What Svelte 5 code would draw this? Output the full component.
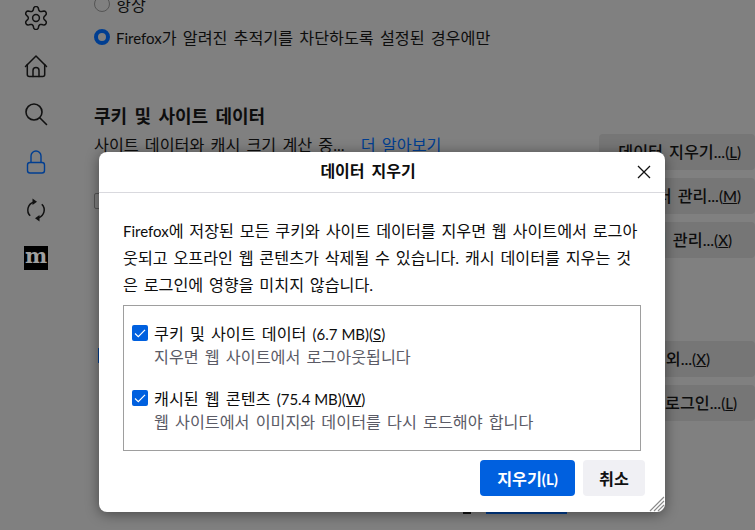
<script>
	const sideIcons = ['gear', 'home', 'search', 'lock', 'sync', 'mdn'];
	const options = [
		{ label: '쿠키 및 사이트 데이터', size: '(6.7 MB)', key: 'S', hint: '지우면 웹 사이트에서 로그아웃됩니다' },
		{ label: '캐시된 웹 콘텐츠', size: '(75.4 MB)', key: 'W', hint: '웹 사이트에서 이미지와 데이터를 다시 로드해야 합니다' }
	];
	const sideButtons = [
		{ label: '데이터 지우기...', key: 'L', pad: 14 },
		{ label: '데이터 관리...', key: 'M', pad: 14 },
		{ label: '예외 관리...', key: 'X', pad: 23 }
	];
	const lowerButtons = [
		{ label: '예외...', key: 'X', pad: 45 },
		{ label: '저장된 로그인...', key: 'L', pad: 18 }
	];

	// six rounded lobes, top lobe pointing up
	function gearPath() {
		const pts = [];
		for (let i = 0; i < 96; i++) {
			const a = (i / 96) * Math.PI * 2;
			const wave = Math.cos(6 * a);
			const r = 9.6 + 1.9 * Math.sign(wave) * Math.pow(Math.abs(wave), 0.6);
			pts.push(`${(12 + r * Math.sin(a)).toFixed(2)} ${(12 - r * Math.cos(a)).toFixed(2)}`);
		}
		return 'M' + pts.join('L') + 'Z';
	}
</script>

<div class="page">
	<nav class="sidebar">
		{#each sideIcons as icon}
			<div class="side-icon">
				{#if icon === 'gear'}
					<svg width="24" height="24" viewBox="0 0 24 24" fill="none" stroke="#111" stroke-width="1.5" stroke-linejoin="round">
						<path d={gearPath()} />
						<circle cx="12" cy="12" r="3.4" />
					</svg>
				{:else if icon === 'home'}
					<svg width="24" height="24" viewBox="0 0 24 24" fill="none" stroke="#111" stroke-width="1.5" stroke-linejoin="round" stroke-linecap="round">
						<path d="M1.500 12.500 12 2l10.500 10.500" />
						<path d="M3.300 10.500V20.500a2 2 0 0 0 2 2h13.400a2 2 0 0 0 2-2V10.500" />
						<path d="M9 22.500v-6a3 3 0 0 1 6 0v6" />
					</svg>
				{:else if icon === 'search'}
					<svg width="24" height="24" viewBox="0 0 24 24" fill="none" stroke="#111" stroke-width="1.6" stroke-linecap="round">
						<circle cx="10" cy="10" r="8" />
						<path d="m16 16 6.500 6.500" />
					</svg>
				{:else if icon === 'lock'}
					<svg width="24" height="24" viewBox="0 0 24 24" fill="none" stroke="#003e91" stroke-width="1.4" stroke-linejoin="round">
						<rect x="3.500" y="12.500" width="17" height="10.500" rx="2.500" />
						<path d="M7 12.500V6a5 5 0 0 1 10 0v6.500" />
					</svg>
				{:else if icon === 'sync'}
					<svg width="24" height="24" viewBox="0 0 24 24" fill="none" stroke="#111" stroke-width="1.5">
						<path d="M6.200 17.800A8.200 8.200 0 0 1 9.500 4.200" />
						<path d="M17.800 6.200A8.200 8.200 0 0 1 14.500 19.800" />
						<path d="M8.500.5 13 3.800 8.500 7z" fill="#111" stroke="none" />
						<path d="M15.500 17 11 20.200l4.500 3.300z" fill="#111" stroke="none" />
					</svg>
				{:else}
					<div class="mdn">m</div>
				{/if}
			</div>
		{/each}
	</nav>

	<main class="content">
		<div class="radio-row clipped">
			<span class="radio"></span>
			<span>항상</span>
		</div>
		<div class="radio-row">
			<span class="radio on"></span>
			<span><span class="latin">Firefox</span>가 알려진 추적기를 차단하도록 설정된 경우에만</span>
		</div>

		<div class="section">
			<div class="section-text">
				<h2>쿠키 및 사이트 데이터</h2>
				<p>사이트 데이터와 캐시 크기 계산 중... <span class="link">더 알아보기</span></p>
				<div class="page-check"></div>
			</div>
			<div class="section-buttons">
				{#each sideButtons as b}
					<div class="bg-button" style="padding-right: {b.pad}px">{b.label}<span class="latin">(<u>{b.key}</u>)</span></div>
				{/each}
			</div>
		</div>

		<div class="section lower">
			<div class="section-text">
				<div class="lower-mark"></div>
			</div>
			<div class="section-buttons">
				{#each lowerButtons as b}
					<div class="bg-button" style="padding-right: {b.pad}px">{b.label}<span class="latin">(<u>{b.key}</u>)</span></div>
				{/each}
			</div>
		</div>

		<div class="bottom-link">
			<span class="dash"></span>
			<span class="dark-link"></span>
		</div>
	</main>

	<div class="dialog">
		<header>
			<h1>데이터 지우기</h1>
			<button class="close" aria-label="닫기">
				<svg width="14" height="14" viewBox="0 0 14 14" stroke="#111" stroke-width="1.3" fill="none">
					<path d="m1 1 12 12M13 1 1 13" />
				</svg>
			</button>
		</header>

		<div class="body">
			<p class="intro"><span class="latin">Firefox</span>에 저장된 모든 쿠키와 사이트 데이터를 지우면 웹 사이트에서 로그아웃되고 오프라인 웹 콘텐츠가 삭제될 수 있습니다. 캐시 데이터를 지우는 것은 로그인에 영향을 미치지 않습니다.</p>

			<div class="box">
				{#each options as o}
					<div class="option">
						<div class="option-main">
							<span class="check">
								<svg width="16" height="16" viewBox="0 0 16 16" fill="none" stroke="#fff" stroke-width="1.2">
									<path d="m3 8.500 3.300 3.200L13 4.800" />
								</svg>
							</span>
							<span>{o.label} <span class="latin">{o.size}(<u>{o.key}</u>)</span></span>
						</div>
						<div class="hint">{o.hint}</div>
					</div>
				{/each}
			</div>

			<div class="actions">
				<button class="primary">지우기<span class="latin">(L)</span></button>
				<button class="secondary">취소</button>
			</div>
		</div>

		<svg class="grip" width="16" height="16" viewBox="0 0 16 16" stroke="#8a8a8a" stroke-width="1.2" fill="none">
			<path d="M1 15 15 1M5 15 15 5M9 15l6-6M13 15l2-2" />
		</svg>
	</div>
</div>

<style>
	:global(body) {
		margin: 0;
		overflow: hidden;
	}

	.page {
		position: relative;
		display: flex;
		width: 755px;
		height: 530px;
		overflow: hidden;
		background: #808080;
		color: #0d0d0d;
		font-family: Lato, "Noto Sans CJK KR", sans-serif;
		font-size: 16.2px;
		word-spacing: 2px;
	}

	.latin {
		font-size: 15px;
		line-height: 1;
		word-spacing: 0;
	}

	.sidebar {
		display: flex;
		flex-direction: column;
		align-items: center;
		gap: 24px;
		width: 72px;
		flex: none;
		padding-top: 6px;
	}

	.side-icon {
		width: 24px;
		height: 24px;
	}

	.mdn {
		width: 24px;
		height: 24px;
		background: #000;
		color: #a0a0a0;
		font-family: "DejaVu Serif", serif;
		font-weight: 700;
		font-size: 21px;
		line-height: 20px;
		text-align: center;
	}

	.content {
		flex: 1;
		min-width: 0;
		padding-left: 22px;
	}

	.radio-row {
		display: flex;
		align-items: center;
		gap: 6px;
		height: 20px;
		white-space: nowrap;
	}

	.radio-row.clipped {
		margin: -6px 0 13px;
	}

	.radio {
		box-sizing: border-box;
		width: 16px;
		height: 16px;
		border: 1px solid #555;
		border-radius: 50%;
		flex: none;
	}

	.radio.on {
		border: 4px solid #003e91;
		background: #808080;
	}

	.section {
		display: flex;
		justify-content: space-between;
		margin-top: 57px;
	}

	h2 {
		margin: 0 0 5px;
		font-size: 18px;
		font-weight: 700;
		line-height: 24px;
		word-spacing: 3px;
	}

	.section p {
		margin: 0;
		line-height: 24px;
		white-space: nowrap;
	}

	.link {
		color: #003e91;
		margin-left: 10px;
		text-decoration: underline;
	}

	.page-check {
		box-sizing: border-box;
		width: 16px;
		height: 16px;
		margin-top: 36px;
		border: 1px solid #555;
		border-radius: 2px;
	}

	.section-buttons {
		display: flex;
		flex-direction: column;
		gap: 8px;
		margin-top: 30px;
		width: 156px;
		flex: none;
	}

	.bg-button {
		box-sizing: border-box;
		height: 36px;
		background: #767676;
		border-radius: 4px;
		font-weight: 500;
		line-height: 36px;
		text-align: right;
		white-space: nowrap;
	}

	.section.lower {
		margin-top: 83px;
	}

	.section.lower .section-buttons {
		margin-top: 0;
	}

	.lower-mark {
		width: 2px;
		height: 15px;
		margin: 7px 0 0 4px;
		background: #003e91;
	}

	.bottom-link {
		display: flex;
		align-items: center;
		gap: 15px;
		margin: 91px 0 0 369px;
	}

	.dash {
		width: 8px;
		height: 2px;
		background: #111;
	}

	.dark-link {
		width: 81px;
		height: 2px;
		background: #003e91;
	}

	/* modal floats over the dimmed prefs page */
	.dialog {
		position: absolute;
		left: 99px;
		top: 152px;
		width: 566px;
		height: 360px;
		background: #fff;
		border-radius: 8px;
		box-shadow: 0 2px 14px rgba(0, 0, 0, 0.45);
		overflow: hidden;
	}

	header {
		position: relative;
		box-sizing: border-box;
		height: 41px;
		padding: 0 28px 2px 0;
		border-bottom: 1px solid #d9d9de;
		display: flex;
		align-items: center;
		justify-content: center;
	}

	h1 {
		margin: 0;
		font-size: 16px;
		font-weight: 700;
		line-height: 38px;
		word-spacing: 3px;
	}

	.close {
		position: absolute;
		right: 14px;
		top: 13px;
		width: 14px;
		height: 14px;
		padding: 0;
		border: 0;
		background: none;
		display: flex;
	}

	.body {
		padding: 24px 24px 0;
	}

	.intro {
		margin: 0;
		line-height: 27px;
		word-break: break-all;
		word-spacing: 1.6px;
		width: 518px;
	}

	.box {
		box-sizing: border-box;
		width: 518px;
		height: 146px;
		margin-top: 7px;
		padding: 14px 8px 0;
		border: 1px solid #9e9e9e;
		display: flex;
		flex-direction: column;
		gap: 16px;
	}

	.option-main {
		display: flex;
		align-items: center;
		gap: 6px;
		height: 25px;
	}

	.check {
		width: 16px;
		height: 16px;
		background: #0060df;
		border-radius: 2px;
		display: flex;
		flex: none;
	}

	.hint {
		margin: 0 0 0 22px;
		color: #5b5b66;
		line-height: 24px;
	}

	.actions {
		display: flex;
		justify-content: flex-end;
		gap: 8px;
		margin: 9px -4px 0 0;
	}

	.actions button {
		height: 36px;
		border: 0;
		border-radius: 4px;
		font: inherit;
		font-weight: 700;
		padding: 0;
	}

	.primary {
		width: 95px;
		background: #0060df;
		color: #fff;
	}

	.secondary {
		width: 62px;
		background: #f0f0f4;
		color: #111;
	}

	.grip {
		position: absolute;
		right: 0;
		bottom: 0;
	}
</style>
